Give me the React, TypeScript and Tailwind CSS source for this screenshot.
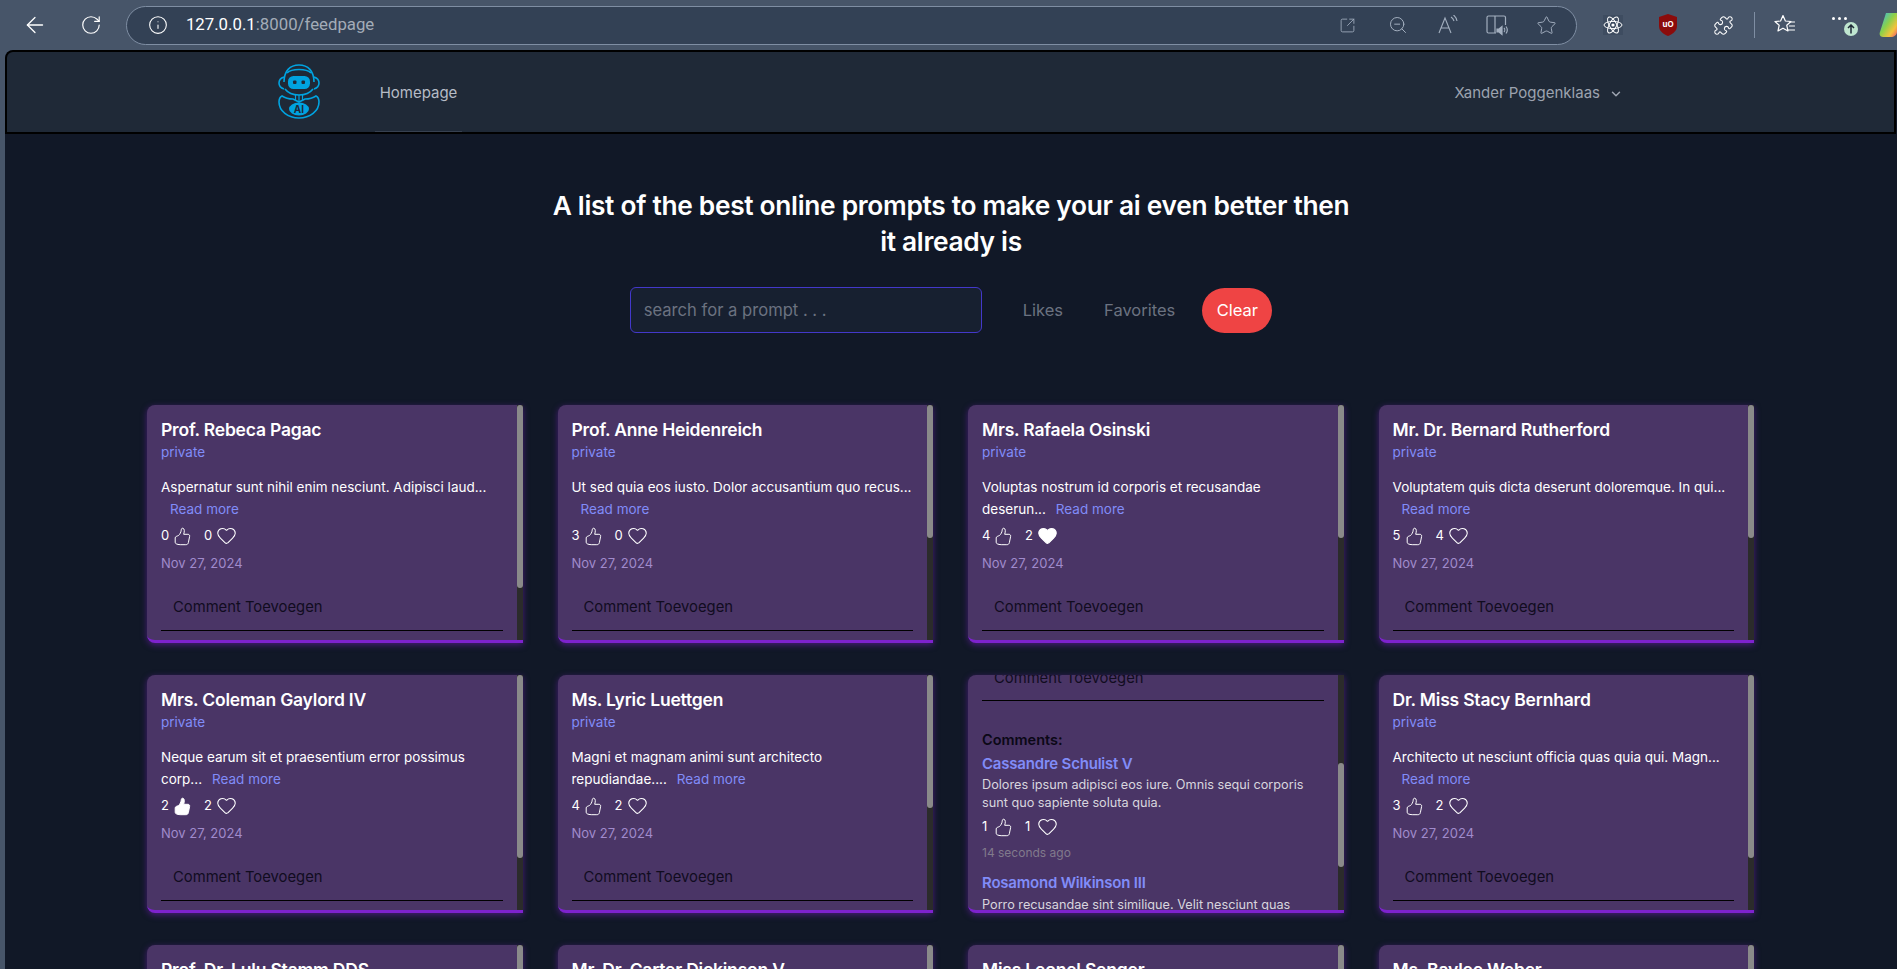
import React from "react";
import { ArrowLeft, RotateCw, Info, SquareArrowOutUpRight, ZoomOut, Star, Puzzle, Heart, ChevronDown } from "lucide-react";

function Thumb({ filled }: { filled?: boolean }) {
  return (
    <svg width="17" height="19" viewBox="0 0 17 19" fill={filled ? "#fff" : "none"} stroke="#fff" strokeWidth="1" strokeLinejoin="round">
      <path d="M4.5 8.5C5.8 7.3 7 5.4 7.2 3.2 7.3 1.6 8 1 9 1.3c1.6.5 1.6 3 .7 6h4.2c1.4 0 2 1.1 1.7 2.2l-1.2 6c-.3 1.5-1.2 2.2-2.6 2.2H6.2c-1.5 0-3-.4-4-.9-.7-.3-1-.8-1-1.5v-4.4c0-1.5 1.7-1.6 3.3-2.4Z" />
    </svg>
  );
}

function Reactions({ likes, hearts, likeFilled, heartFilled }: { likes: number; hearts: number; likeFilled?: boolean; heartFilled?: boolean }) {
  return (
    <div className="flex items-center h-[22px] text-[13px] text-white">
      <span className="w-[13px]">{likes}</span>
      <Thumb filled={likeFilled} />
      <span className="ml-[13px] w-[12px]">{hearts}</span>
      <Heart size={21} strokeWidth={1.2} color="#fff" fill={heartFilled ? "#fff" : "none"} className="-mt-[2px]" />
    </div>
  );
}

function Scrollbar({ offset = 0, size }: { offset?: number; size: number }) {
  return (
    <div className="w-[6px] shrink-0 bg-[#2b2b2b]">
      <div className="w-full rounded-[3px] bg-[#8a8a8a]" style={{ marginTop: offset, height: size }} />
    </div>
  );
}

function CommentBox({ clipped }: { clipped?: boolean }) {
  return (
    <div className={`flex h-[47px] items-center border-b border-black pl-[12px] text-[14.8px] text-[#110c1f] ${clipped ? "-mt-[21px] pt-[3px]" : "mt-[12px]"}`}>
      Comment Toevoegen
    </div>
  );
}

type CardData = { name: string; l1: string; l2?: string; likes: number; hearts: number; likeFilled?: boolean; heartFilled?: boolean; thumb: number };

function Shell({ children, offset, thumb }: { children: React.ReactNode; offset?: number; thumb: number }) {
  return (
    <div className="flex h-[238px] overflow-hidden rounded-l-lg border-b-[3px] border-[#7e22ce] bg-[#4a3566] shadow-[0_2px_6px_rgba(126,34,206,0.5)]">
      <div className="min-w-0 flex-1 overflow-hidden pl-[14px] pr-[14px]">{children}</div>
      <Scrollbar offset={offset} size={thumb} />
    </div>
  );
}

function PromptCard({ c }: { c: CardData }) {
  return (
    <Shell thumb={c.thumb}>
      <div className="mt-[12px] text-[17.5px] font-semibold leading-[26px] text-white tracking-[-0.2px]">{c.name}</div>
      <div className="text-[13.5px] leading-[18px] text-[#818cf8]">private</div>
      <div className="mt-[15px] text-[13.5px] leading-[22px] text-white whitespace-nowrap">
        <div>{c.l1}</div>
        <div>
          {c.l2 && <span>{c.l2}</span>}
          <span className={`text-[#818cf8] ${c.l2 ? "ml-[10px]" : "ml-[9px]"}`}>Read more</span>
        </div>
      </div>
      <div className="mt-[5px]">
        <Reactions likes={c.likes} hearts={c.hearts} likeFilled={c.likeFilled} heartFilled={c.heartFilled} />
      </div>
      <div className="mt-[7px] text-[13px] leading-[18px] text-[#a08bcc]">Nov 27, 2024</div>
      <CommentBox />
    </Shell>
  );
}

function CommentsCard() {
  return (
    <Shell thumb={104} offset={88}>
      <CommentBox clipped />
      <div className="mt-[30px] text-[14.5px] font-semibold leading-[18px] text-[#0b0816]">Comments:</div>
      <div className="mt-[5px] text-[15px] font-semibold leading-[20px] text-[#818cf8] tracking-[-0.2px]">Cassandre Schulist V</div>
      <div className="mt-[2px] text-[12.7px] leading-[18px] text-[#d8d5de] whitespace-nowrap">
        <div>Dolores ipsum adipisci eos iure. Omnis sequi corporis</div>
        <div>sunt quo sapiente soluta quia.</div>
      </div>
      <div className="mt-[4px]">
        <Reactions likes={1} hearts={1} />
      </div>
      <div className="mt-[6px] text-[12px] leading-[18px] text-[#817a8c]">14 seconds ago</div>
      <div className="mt-[11px] text-[15px] font-semibold leading-[20px] text-[#818cf8] tracking-[-0.2px]">Rosamond Wilkinson III</div>
      <div className="mt-[3px] text-[12.7px] leading-[18px] text-[#d8d5de] whitespace-nowrap">Porro recusandae sint similique. Velit nesciunt quas</div>
    </Shell>
  );
}

const row1: CardData[] = [
  { name: "Prof. Rebeca Pagac", l1: "Aspernatur sunt nihil enim nesciunt. Adipisci laud...", likes: 0, hearts: 0, thumb: 183 },
  { name: "Prof. Anne Heidenreich", l1: "Ut sed quia eos iusto. Dolor accusantium quo recus...", likes: 3, hearts: 0, thumb: 133 },
  { name: "Mrs. Rafaela Osinski", l1: "Voluptas nostrum id corporis et recusandae", l2: "deserun...", likes: 4, hearts: 2, heartFilled: true, thumb: 133 },
  { name: "Mr. Dr. Bernard Rutherford", l1: "Voluptatem quis dicta deserunt doloremque. In qui...", likes: 5, hearts: 4, thumb: 133 },
];
const row2a: CardData[] = [
  { name: "Mrs. Coleman Gaylord IV", l1: "Neque earum sit et praesentium error possimus", l2: "corp...", likes: 2, hearts: 2, likeFilled: true, thumb: 183 },
  { name: "Ms. Lyric Luettgen", l1: "Magni et magnam animi sunt architecto", l2: "repudiandae....", likes: 4, hearts: 2, thumb: 133 },
];
const row2b: CardData = { name: "Dr. Miss Stacy Bernhard", l1: "Architecto ut nesciunt officia quas quia qui. Magn...", likes: 3, hearts: 2, thumb: 183 };
const row3 = ["Prof. Dr. Lulu Stamm DDS", "Mr. Dr. Carter Dickinson V", "Miss Leonel Senger", "Ms. Baylee Weber"];

function Logo() {
  return (
    <svg width="42" height="55" viewBox="0 0 42 55" fill="none" stroke="#00a3e0" strokeWidth="1.6">
      <path d="M6 18C6 7 12 1 21 1s15 6 15 17" />
      <path d="M9 9c3-3 7-3.500 12-3.500S30 6 33 9" />
      <path d="M6 13c-3 1-5 3-5 6s2 5 5 6M36 13c3 1 5 3 5 6s-2 5-5 6" />
      <path d="M7 25c3 4 8 6 14 6s11-2 14-6" />
      <rect x="10" y="12" width="22" height="13" rx="5.500" fill="#00a3e0" stroke="none" />
      <rect x="15" y="16.500" width="3.500" height="3.500" rx="1" fill="#1f2937" stroke="none" />
      <rect x="23.500" y="16.500" width="3.500" height="3.500" rx="1" fill="#1f2937" stroke="none" />
      <path d="M17.500 31v6M21 31v6M24.500 31v6" strokeWidth="1.200" />
      <path d="M15 35c-4 0-8-1-11-3-2 1-3 3-3 6 0 9 9 16 20 16s20-7 20-16c0-3-1-5-3-6-3 2-7 3-11 3l-6 3-6-3Z" />
      <ellipse cx="21" cy="45" rx="10" ry="6.500" fill="#00a3e0" stroke="none" />
      <text x="21" y="49" textAnchor="middle" fontSize="10" fontWeight="700" fill="#1f2937" stroke="none" fontFamily="Inter, sans-serif">AI</text>
    </svg>
  );
}

function BrowserBar() {
  const gray = "#a3afbf";
  return (
    <div className="relative flex h-[50px] shrink-0 items-center bg-[#475569]">
      <ArrowLeft size={26} strokeWidth={1.2} color="#fff" className="ml-[22px]" />
      <RotateCw size={22} strokeWidth={1.3} color="#fff" className="ml-[32px]" />
      <div className="ml-[24px] flex h-[39px] w-[1454px] items-center rounded-full border border-[#7f8ea3] bg-[#334155]">
        <Info size={20} strokeWidth={1.3} color="#fff" className="ml-[21px]" />
        <div className="ml-[18px] font-['Roboto',sans-serif] text-[16.8px] text-white">
          127.0.0.1<span className="text-[#a3acb8]">:8000/feedpage</span>
        </div>
        <div className="ml-auto mr-[19px] flex items-center">
          <SquareArrowOutUpRight size={17} strokeWidth={1.2} color={gray} />
          <ZoomOut size={20} strokeWidth={1.2} color={gray} className="ml-[32px]" />
          <svg width="21" height="20" viewBox="0 0 21 20" fill="none" stroke={gray} strokeWidth="1.1" className="ml-[30px]">
            <path d="M1 18 7 3l6 15M3.200 13h7.600M13 2c1.500 1 2.500 2.500 3 4M15.500 0c2 1.500 3 3.500 3.500 6" />
          </svg>
          <svg width="22" height="22" viewBox="0 0 22 22" fill="none" stroke={gray} strokeWidth="1.2" className="ml-[27px]">
            <path d="M10 19H2.500A1.500 1.500 0 0 1 1 17.500v-14A1.500 1.500 0 0 1 2.500 2H9v17M9 2h9a1.500 1.500 0 0 1 1.500 1.500V11" />
            <path d="M11 15h2l3-2.500v8L13 18h-2Z" fill={gray} />
            <path d="M18 14c1 1 1 3 0 4M20 12.500c1.500 2 1.500 5 0 7" />
          </svg>
          <Star size={21} strokeWidth={1.1} color={gray} className="ml-[28px]" />
        </div>
      </div>
      <div className="ml-[26px] flex h-[20px] w-[20px] items-center justify-center bg-[#3e4c60]">
        <svg width="20" height="20" viewBox="0 0 20 20" fill="none" stroke="#fff" strokeWidth="1">
          <ellipse cx="10" cy="10" rx="9" ry="3.600" />
          <ellipse cx="10" cy="10" rx="9" ry="3.600" transform="rotate(60 10 10)" />
          <ellipse cx="10" cy="10" rx="9" ry="3.600" transform="rotate(120 10 10)" />
          <circle cx="10" cy="10" r="1.600" fill="#fff" stroke="none" />
        </svg>
      </div>
      <svg width="18" height="22" viewBox="0 0 18 22" className="ml-[36px]">
        <path d="M9 0 18 3v9c0 5-4 8-9 10-5-2-9-5-9-10V3Z" fill="#8b0b0b" />
        <text x="9" y="13" textAnchor="middle" fontSize="8" fontWeight="700" fill="#fff" fontFamily="Inter, sans-serif">uO</text>
      </svg>
      <Puzzle size={21} strokeWidth={1.2} color="#fff" className="ml-[36px]" />
      <div className="ml-[20px] h-[26px] w-px bg-[#7f8ea3]" />
      <svg width="22" height="22" viewBox="0 0 22 22" fill="none" stroke="#fff" strokeWidth="1.2" className="ml-[19px]">
        <path d="m9 1.500 2.400 5.500 5.600.500-4.200 3.800 1.200 5.700L9 14.200l-5 2.800 1.200-5.700L1 7.500 6.600 7Z" strokeLinejoin="round" />
        <path d="M15 8h6M15 12h6M14 16h7" />
      </svg>
      <div className="relative ml-[36px] flex h-[24px] w-[26px] items-start pt-[4px]">
        <span className="h-[3px] w-[3px] rounded-full bg-white" />
        <span className="ml-[3px] h-[3px] w-[3px] rounded-full bg-white" />
        <span className="ml-[3px] h-[3px] w-[3px] rounded-full bg-white" />
        <span className="absolute left-[12px] top-[9px] flex h-[14px] w-[14px] items-center justify-center rounded-full bg-[#bfe6d0]">
          <svg width="8" height="10" viewBox="0 0 8 10" fill="none" stroke="#1f2937" strokeWidth="1.500">
            <path d="M4 9.500V1M1 4l3-3 3 3" />
          </svg>
        </span>
      </div>
      <svg width="18" height="26" viewBox="0 0 18 26" className="ml-[21px]">
        <defs>
          <linearGradient id="cp" x1="0" y1="0" x2="1" y2="1">
            <stop offset="0" stopColor="#2fb7f0" />
            <stop offset="0.45" stopColor="#8bd04a" />
            <stop offset="0.75" stopColor="#f5c33b" />
            <stop offset="1" stopColor="#ef5a6f" />
          </linearGradient>
        </defs>
        <path d="M7 1h11v19c0 3-3 5-6 5H4c-3 0-4-3-3-5Z" fill="url(#cp)" />
      </svg>
    </div>
  );
}

export default function App() {
  return (
    <div className="flex h-screen w-full flex-col overflow-hidden bg-[#475569] font-['Inter',sans-serif]">
      <BrowserBar />
      <div className="ml-[5px] min-h-0 flex-1 overflow-hidden rounded-tl-lg bg-[#111827]">
        <nav className="mr-[1px] flex h-[84px] items-stretch rounded-tl-lg border-2 border-black bg-[#1f2937]">
          <div className="ml-[271px] flex items-center pb-[1px]">
            <Logo />
          </div>
          <div className="ml-[55px] flex w-[87px] items-center justify-center border-b border-[#374151] pt-[3px] text-[15px] text-[#b6bcc6]">
            Homepage
          </div>
          <div className="ml-auto mr-[271px] flex items-center gap-[9px] pt-[3px] text-[15px] text-[#9ca3af]">
            Xander Poggenklaas
            <ChevronDown size={14} strokeWidth={2.5} color="#9ca3af" />
          </div>
        </nav>
        <main>
          <h1 className="mx-auto mt-[54px] w-[812px] text-center text-[26.3px] font-semibold leading-[36px] text-white tracking-[-0.3px]">
            A list of the best online prompts to make your ai even better then it already is
          </h1>
          <div className="mt-[27px] flex items-center justify-center">
            <div className="flex h-[46px] w-[352px] items-center rounded-md border border-[#4338ca] bg-[#172030] pl-[13px] text-[16.6px] text-[#6b7280]">
              search for a prompt . . .
            </div>
            <span className="ml-[41px] text-[16.5px] text-[#6b7280]">Likes</span>
            <span className="ml-[41px] text-[16.5px] text-[#6b7280]">Favorites</span>
            <span className="ml-[27px] flex h-[45px] w-[70px] items-center justify-center rounded-full bg-[#ef4444] text-[16.5px] text-white">Clear</span>
          </div>
          <div className="ml-[142px] mt-[72px] grid w-[1607px] grid-cols-4 gap-x-[35px] gap-y-[32px]">
            {row1.map((c) => (
              <PromptCard key={c.name} c={c} />
            ))}
            {row2a.map((c) => (
              <PromptCard key={c.name} c={c} />
            ))}
            <CommentsCard />
            <PromptCard c={row2b} />
            {row3.map((n) => (
              <Shell key={n} thumb={133}>
                <div className="mt-[12px] text-[17.5px] font-semibold leading-[26px] text-white tracking-[-0.2px]">{n}</div>
              </Shell>
            ))}
          </div>
        </main>
      </div>
    </div>
  );
}
